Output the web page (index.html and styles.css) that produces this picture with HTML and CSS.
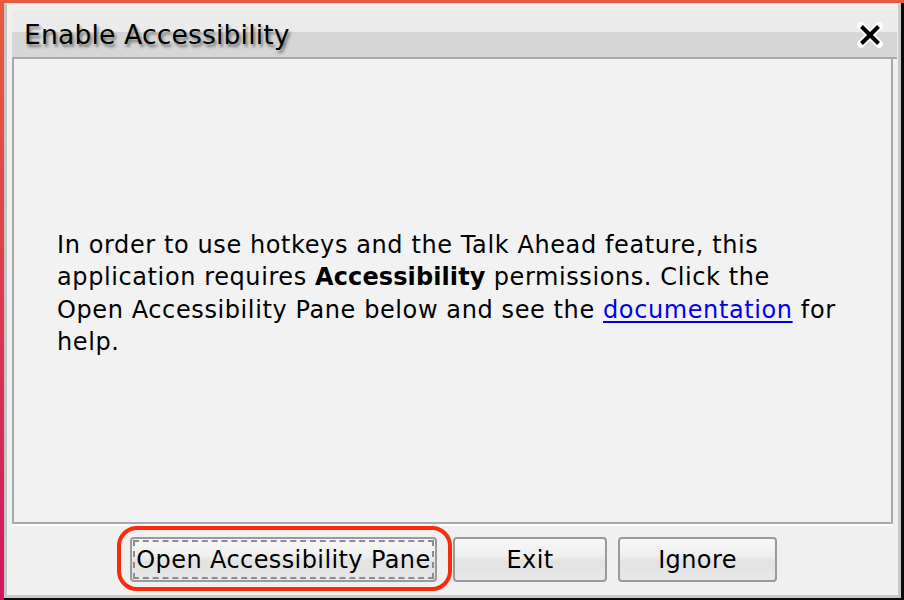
FILE: index.html
```html
<!DOCTYPE html>
<html>
<head>
<meta charset="utf-8">
<link rel="stylesheet" href="styles.css">
</head>
<body>
<div class="window">
  <div class="frame">
    <div class="titlebar">
      <span class="title">Enable Accessibility</span>
      <svg class="close" width="28" height="28" viewBox="0 0 28 28">
        <path d="M5 5 L23 23 M23 5 L5 23" stroke="#fff" stroke-width="7.5" stroke-linecap="round" fill="none"/>
        <path d="M5.5 5.5 L22.5 22.5 M22.5 5.5 L5.5 22.5" stroke="#000" stroke-width="4" stroke-linecap="butt" fill="none"/>
      </svg>
    </div>
    <div class="panel">
      <p class="message">In order to use hotkeys and the Talk Ahead feature, this<br>application requires <b>Accessibility</b> permissions. Click the<br>Open Accessibility Pane below and see the <a href="#">documentation</a> for<br>help.</p>
    </div>
    <div class="buttons">
      <div class="focus-wrap">
        <button class="btn btn-open"><span class="focus-dash">Open Accessibility Pane</span></button>
        <div class="focus-ring"></div>
      </div>
      <button class="btn btn-exit">Exit</button>
      <button class="btn btn-ignore">Ignore</button>
    </div>
  </div>
</div>
</body>
</html>
```
FILE: styles.css
```css
html, body {
  margin: 0;
  padding: 0;
}
body {
  width: 904px;
  height: 600px;
  overflow: hidden;
  background: linear-gradient(to bottom, #e55c3f 0%, #dd3a4f 50%, #d1155f 100%);
  font-family: "DejaVu Sans", sans-serif;
}
.window {
  margin: 3px 0 0 4px;
  width: 900px;
  height: 597px;
  box-sizing: border-box;
  border-right: 3px solid #0a0a0a;
  border-bottom: 2px solid #0a0a0a;
}
.frame {
  height: 100%;
  box-sizing: border-box;
  border-left: 3px solid #c5c5c5;
  border-right: 3px solid #cbcbcb;
  border-bottom: 3px solid #c8c8c8;
  border-top: 1px solid #dcdcdc;
  background: #f0f0f0;
  padding: 6px 1px 0 5px;
  display: flex;
  flex-direction: column;
}
.titlebar {
  height: 47px;
  display: flex;
  align-items: center;
  justify-content: space-between;
  padding: 0 13px 0 12px;
  background: linear-gradient(to bottom, #ebebeb 0%, #ebebeb 46%, #d6d6d6 47%, #d6d6d6 100%);
  border-bottom: 2px solid #a9a9a9;
}
.title {
  font-size: 26.6px;
  letter-spacing: 0.15px;
  color: #000;
  text-shadow: 2px 3px 3px rgba(0, 0, 0, 0.45);
  margin-top: 2px;
}
.close {
  display: block;
  margin-top: 2px;
}
.panel {
  height: 465px;
  box-sizing: border-box;
  margin-right: 4px;
  border-left: 2px solid #a9a9a9;
  border-right: 2px solid #a9a9a9;
  border-bottom: 2px solid #a9a9a9;
  background: #f2f2f2;
  box-shadow: 0 2px 0 #ffffff;
  display: flex;
  align-items: flex-start;
  padding: 170px 20px 0 43px;
}
.message {
  margin: 0;
  font-size: 24px;
  letter-spacing: 0.6px;
  line-height: 32.4px;
  color: #000;
  white-space: nowrap;
}
.message b {
  font-weight: bold;
  letter-spacing: 0.1px;
}
.message a {
  color: #0000ee;
  text-decoration: underline;
  text-underline-offset: 3px;
}
.buttons {
  display: flex;
  align-items: flex-start;
  padding-top: 13px;
  padding-left: 118px;
}
.focus-wrap {
  position: relative;
  margin-right: 16px;
}
.btn {
  font-family: "DejaVu Sans", sans-serif;
  font-size: 24px;
  letter-spacing: 0.4px;
  white-space: nowrap;
  color: #000;
  height: 45px;
  box-sizing: border-box;
  border: 2px solid #9a9a9a;
  border-radius: 4px;
  background: linear-gradient(to bottom, #f7f7f7 0%, #efefef 40%, #e2e2e2 55%, #e8e8e8 100%);
  padding: 0;
  margin: 0;
  display: flex;
  align-items: center;
  justify-content: center;
}
.btn-open {
  width: 307px;
  padding: 1px;
}
.focus-dash {
  display: flex;
  align-items: center;
  justify-content: center;
  width: 100%;
  height: 100%;
  box-sizing: border-box;
  border: 2px dashed #8c8c8c;
  padding-top: 1px;
  white-space: nowrap;
}
.focus-ring {
  position: absolute;
  left: -13px;
  top: -11px;
  right: -15px;
  bottom: -9px;
  border: 4px solid #fa2a0a;
  border-radius: 20px;
  box-sizing: border-box;
}
.btn-exit {
  width: 154px;
  margin-right: 11px;
}
.btn-ignore {
  width: 159px;
}
```
